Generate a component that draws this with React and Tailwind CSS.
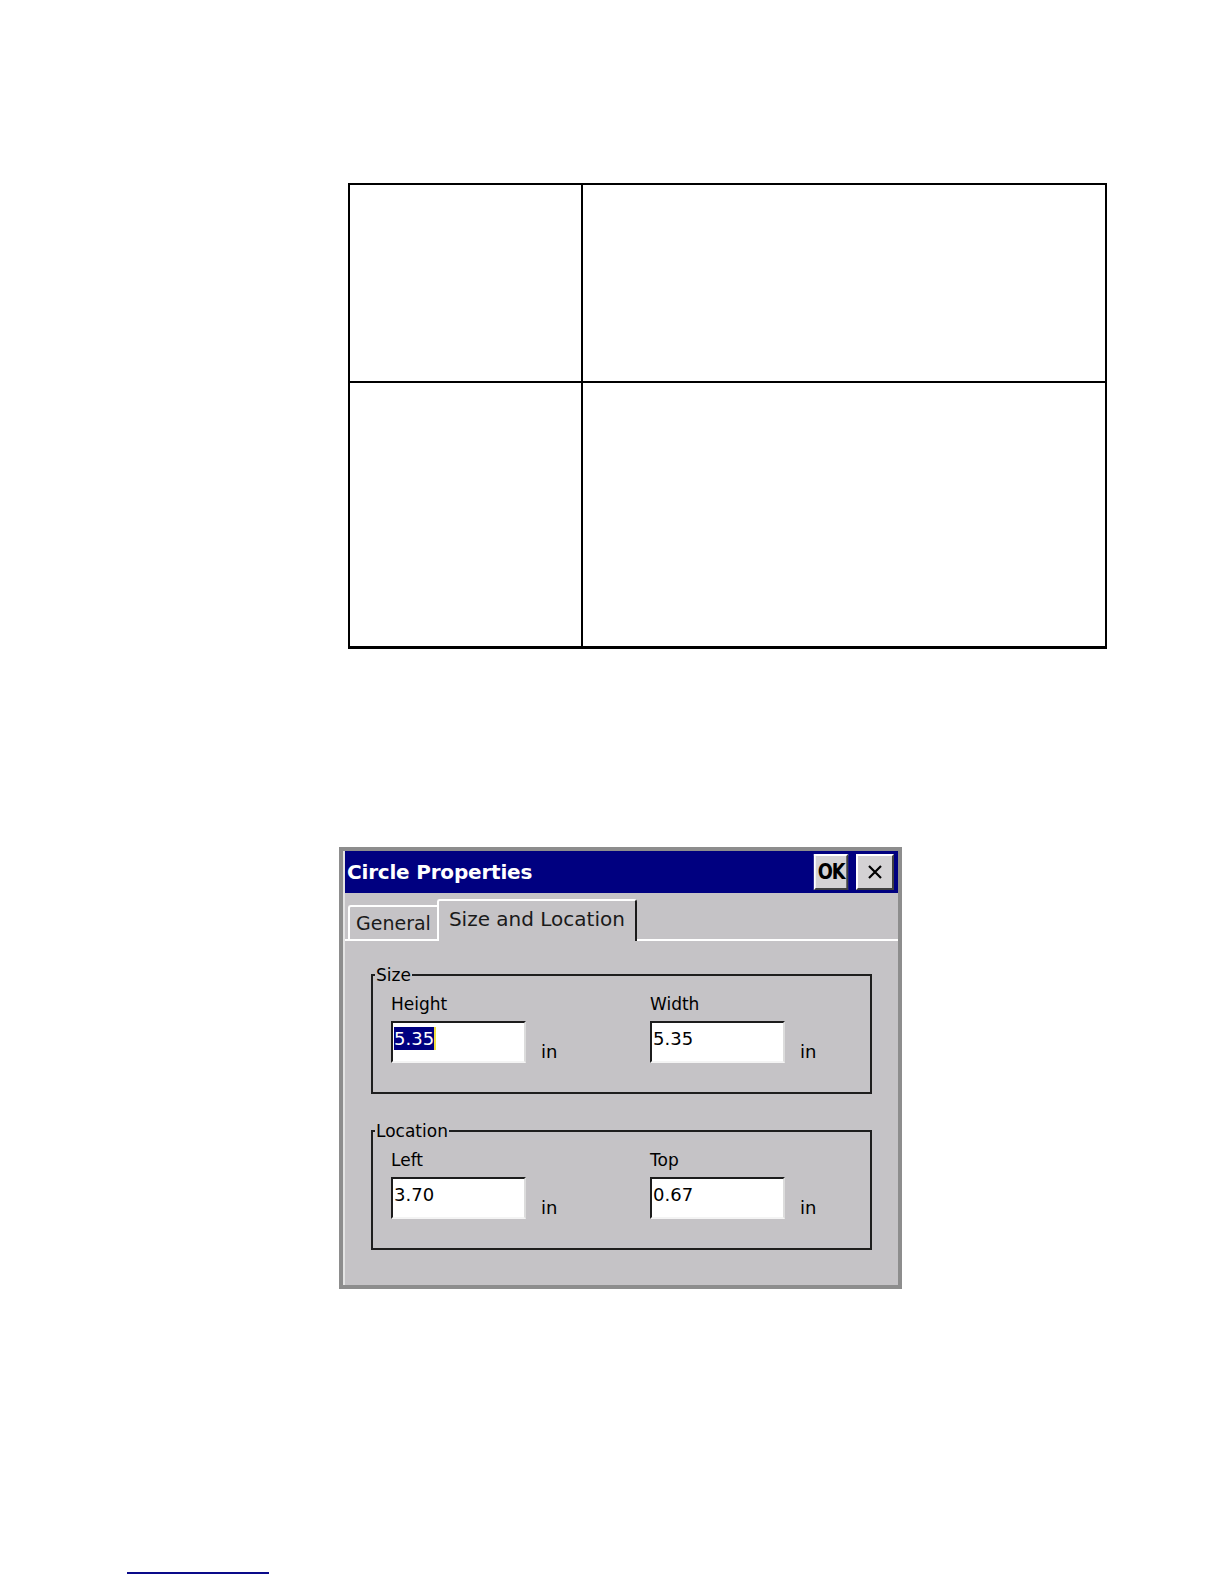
const fieldBox =
  'w-[135px] h-[42px] bg-white border-2 border-t-[#1c1c1c] border-l-[#1c1c1c] border-r-[#dcdcdc] border-b-[#f4f4f4] pl-[1px] pt-[5px] text-[18px] leading-[22px] text-black';

const Field = ({ label, value, selected }) => (
  <div className="flex flex-col">
    <span className="text-[17px] leading-[20px] text-black mb-[7px]">{label}</span>
    <div className="flex items-end">
      <div className={fieldBox}>
        {selected ? (
          <span className="bg-[#000080] text-white border-r-2 border-[#f0e040] py-[1px]">{value}</span>
        ) : (
          value
        )}
      </div>
      <span className="text-[18px] leading-[22px] ml-[15px] text-black">in</span>
    </div>
  </div>
);

const GroupBox = ({ title, children }) => (
  <fieldset className="border-2 border-[#1e1e1e] mx-[26px] pl-[18px] pr-[10px] pt-[9px] h-[129px]">
    <legend className="text-[17px] leading-[20px] px-[1px] -ml-[16px] text-black">{title}</legend>
    <div className="grid grid-cols-[259px_1fr]">{children}</div>
  </fieldset>
);

export default function App() {
  return (
    <div className="min-h-[1584px] bg-white font-['DejaVu_Sans',sans-serif]">
      <div className="pt-[183px] pl-[348px]">
        <div className="w-[759px] border-2 border-black border-b-[3px] grid grid-cols-[233px_1fr] grid-rows-[198px_263px]">
          <div className="border-r-2 border-b-2 border-black" />
          <div className="border-b-2 border-black" />
          <div className="border-r-2 border-black" />
          <div />
        </div>
      </div>

      <div className="ml-[339px] mt-[198px] w-[563px] bg-[#8d8d8d] p-[4px]">
        <div className="bg-[#c5c3c6] border-l-2 border-[#e4e4e4]">
          <div className="h-[42px] bg-[#000080] flex items-center justify-between pl-[2px] pr-[4px]">
            <span className="text-white font-bold text-[20px] leading-none tracking-[-0.2px]">Circle Properties</span>
            <div className="flex gap-[6px]">
              <button
                type="button"
                className="w-[38px] h-[36px] bg-[#d4d2d4] border-2 border-t-white border-l-white border-r-[#404040] border-b-[#404040] font-['DejaVu_Sans_Condensed','DejaVu_Sans',sans-serif] font-bold text-[22px] leading-none text-black tracking-[-1.5px] scale-x-[0.9]"
              >
                OK
              </button>
              <button
                type="button"
                className="w-[38px] h-[36px] bg-[#d4d2d4] border-2 border-t-white border-l-white border-r-[#404040] border-b-[#404040] flex items-center justify-center"
              >
                <svg width="18" height="18" viewBox="0 0 18 18">
                  <path d="M3 3 L15 15 M15 3 L3 15" stroke="#000" strokeWidth="2.2" fill="none" />
                </svg>
              </button>
            </div>
          </div>

          <div className="flex items-end pt-[6px] pl-[3px] border-b-2 border-white">
            <div className="h-[34px] px-[6px] flex items-center bg-[#c5c3c6] border-2 border-r-0 border-b-0 border-t-white border-l-white rounded-tl-[3px] text-[19px] text-[#1a1a1a]">
              General
            </div>
            <div className="relative -mb-[2px] h-[42px] px-[10px] pb-[4px] flex items-center bg-[#c5c3c6] border-2 border-b-0 border-t-white border-l-white border-r-[#1a1a1a] rounded-t-[3px] text-[20px] text-[#1a1a1a]">
              Size and Location
            </div>
          </div>

          <div className="pt-[24px] pb-[35px] flex flex-col gap-[27px]">
            <GroupBox title="Size">
              <Field label="Height" value="5.35" selected />
              <Field label="Width" value="5.35" />
            </GroupBox>
            <GroupBox title="Location">
              <Field label="Left" value="3.70" />
              <Field label="Top" value="0.67" />
            </GroupBox>
          </div>
        </div>
      </div>

      <div className="ml-[127px] mt-[283px] w-[142px] h-[2px] bg-[#0a0a8a]" />
    </div>
  );
}
